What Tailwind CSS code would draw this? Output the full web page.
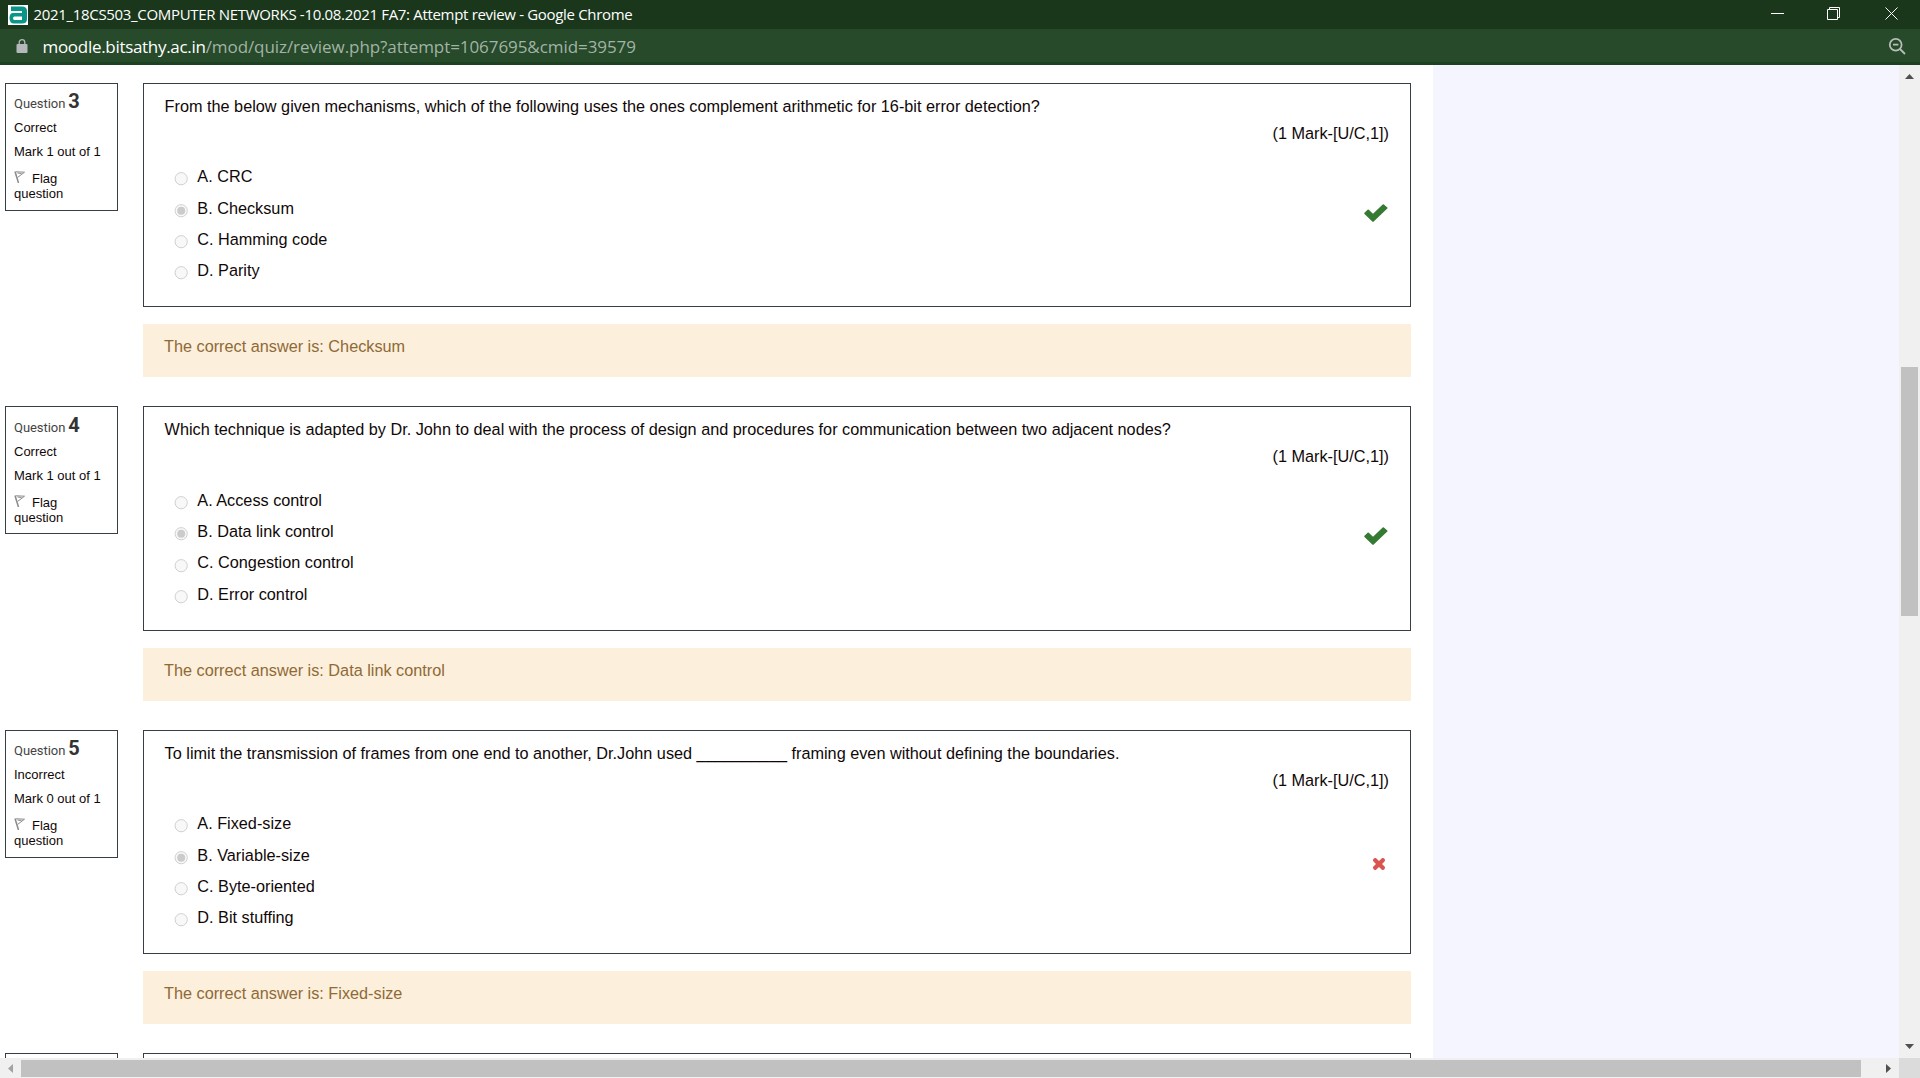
<!DOCTYPE html>
<html lang="en">
<head>
<meta charset="utf-8">
<title>2021_18CS503_COMPUTER NETWORKS -10.08.2021 FA7: Attempt review</title>
<script src="https://cdn.jsdelivr.net/npm/@tailwindcss/browser@4"></script>
</head>
<body class="flex h-[1078px] w-[1920px] flex-col overflow-hidden bg-white font-['Liberation_Sans',Arial,sans-serif]">
<header class="shrink-0 font-['Open_Sans',sans-serif]">
  <div class="flex h-[29px] items-center bg-[#1a371c] text-white">
    <svg class="ml-2 size-5 shrink-0" viewBox="0 0 20 20"><path fill="#fff" d="M0 0h20v20H0z"/><path fill="#0b9488" d="M3 1.500h11q5 0 5 4.500v8q0 4.500-5 4.500H6Q1.500 18.500 1.500 13T6 8h8V6H3zM6.500 11.500q-1.500 0-1.500 1.700T6.500 15H14v-3.500z"/></svg>
    <span class="ml-[5.500px] text-[15px] leading-[29px] tracking-[-0.32px] whitespace-nowrap">2021_18CS503_COMPUTER NETWORKS -10.08.2021 FA7: Attempt review - Google Chrome</span>
    <svg class="ml-auto h-[29px] w-[149px] shrink-0" viewBox="0 0 149 29" fill="none" stroke="#fff"><path d="M0 13.500h13M56.500 9.500h10v10h-10zM58.500 9V7.500h10v10H67M114.500 7.500l12 12m0-12l-12 12"/></svg>
  </div>
  <div class="flex h-9 items-center border-b-[3px] border-[#1b4321] bg-[#264a2a]">
    <svg class="ml-4 h-[14px] w-3 shrink-0" viewBox="0 0 12 14"><path fill="#b4b8bb" d="M1.500 5h9q1 0 1 1v7q0 1-1 1h-9q-1 0-1-1V6q0-1 1-1z"/><path fill="none" stroke="#b4b8bb" stroke-width="1.300" d="M3.200 5.500V3.500a2.800 2.800 0 0 1 5.600 0v2"/></svg>
    <span class="ml-[14.500px] pt-0.5 text-[17px] leading-[33px] tracking-[-0.3px] text-white">moodle.bitsathy.ac.in</span><span class="pt-0.5 text-[17px] leading-[33px] tracking-[-0.07px] text-[#a3b3a5]">/mod/quiz/review.php?attempt=1067695&amp;cmid=39579</span>
    <svg class="mr-[14px] ml-auto size-[18px]" viewBox="0 0 18 18" fill="none" stroke="#b9bdb9" stroke-width="1.800"><circle cx="7.700" cy="7.700" r="5.900"/><path d="M12 12l5 5M5 7.700h5.400"/></svg>
  </div>
</header>

<div class="flex min-h-0 flex-1">
  <main id="questions" class="h-[993px] w-[1433px] shrink-0 overflow-hidden bg-white pt-[18px] pl-[5px]"></main>
  <aside class="flex-1 bg-[#f4f5ff]"></aside>
  <div class="flex w-[21px] shrink-0 flex-col items-center bg-[#f0f0f0]">
    <svg class="h-[302px] w-[21px] shrink-0" viewBox="0 0 21 302"><path fill="#505050" d="M6 14l4.500-5 4.500 5z"/></svg>
    <div class="h-[249px] w-[17px] bg-[#c1c1c1]"></div>
    <svg class="mt-auto h-[21px] w-[21px] shrink-0" viewBox="0 0 21 21"><path fill="#505050" d="M6 7h9l-4.500 5z"/></svg>
  </div>
</div>
<footer class="flex h-5 shrink-0 items-center bg-[#f0f0f0]">
  <svg class="h-5 w-[21px] shrink-0" viewBox="0 0 21 20"><path fill="#a3a3a3" d="M13 6v9l-5-4.500z"/></svg>
  <div class="h-[17px] w-[1840px] shrink-0 bg-[#c1c1c1]"></div>
  <svg class="h-5 w-[38px] shrink-0" viewBox="0 0 38 20"><path fill="#505050" d="M25 6v9l5-4.500z"/></svg>
  <div class="h-5 w-[21px] bg-[#dbdbdb]"></div>
</footer>

<script>
const questions = [
  { no: 3, ok: true, mark: 1, shift: false, h: 'h-[323px]', box: 'h-[224px]',
    text: 'From the below given mechanisms, which of the following uses the ones complement arithmetic for 16-bit error detection?',
    options: ['CRC', 'Checksum', 'Hamming code', 'Parity'], answer: 'Checksum' },
  { no: 4, ok: true, mark: 1, shift: true, h: 'h-[324px]', box: 'h-[225px]',
    text: 'Which technique is adapted by Dr. John to deal with the process of design and procedures for communication between two adjacent nodes?',
    options: ['Access control', 'Data link control', 'Congestion control', 'Error control'], answer: 'Data link control' },
  { no: 5, ok: false, mark: 0, shift: false, h: 'h-[323px]', box: 'h-[224px]',
    text: 'To limit the transmission of frames from one end to another, Dr.John used __________ framing even without defining the boundaries.',
    options: ['Fixed-size', 'Variable-size', 'Byte-oriented', 'Bit stuffing'], answer: 'Fixed-size' },
];
const tick = '<svg class="mt-[110px] mr-[22px] h-[18px] w-6" viewBox="0 0 24 18"><path fill="#357a32" d="M0.500 8.800L3.600 5.700q.6-.5 1.200 0L9 9.800 18.700.4q.6-.5 1.200 0l3.400 3q.6.600 0 1.200L9.700 17.600q-.7.600-1.400 0L.5 10q-.5-.6 0-1.200z"/></svg>';
const cross = '<svg class="mt-[117px] mr-[25px] size-3" viewBox="0 0 12 12"><path stroke="#d9534f" stroke-width="4.200" stroke-linecap="round" d="M2.200 2.200l7.600 7.600M9.800 2.200l-7.600 7.600"/></svg>';
const flag = '<svg class="h-3 w-[11px]" viewBox="0 0 11 12" fill="none" stroke="#8a8a8a"><path stroke-width="1.500" d="M1 0.500L4.500 12"/><path d="M2 .8L10.500 1.200 3.500 6.500M3.500 2l4 .5"/></svg>';

document.getElementById('questions').innerHTML = questions.map(q => `
  <section class="flex ${q.h} items-start">
    <div class="h-[128px] w-[113px] border border-[#373f46] ${q.shift ? 'pt-[9px]' : 'pt-2'} pl-2 text-[13px] text-[#100808]">
      <div class="flex h-6 items-baseline font-['Roboto',sans-serif] leading-[19px] text-[#444]"><span class="tracking-[-0.05px]">Question</span><b class="ml-[3px] text-xl leading-[19px] text-[#333]">${q.no}</b></div>
      <div class="h-6 leading-6">${q.ok ? 'Correct' : 'Incorrect'}</div>
      <div class="h-6 leading-6">Mark ${q.mark} out of 1</div>
      <div class="mt-[7px] flex h-[15px] leading-[15px]">${flag}<span class="ml-[7px]">Flag</span></div>
      <div class="leading-[15px]">question</div>
    </div>
    <div class="ml-[25px] w-[1268px]">
      <div class="flex ${q.box} justify-between border border-[#373f46] pt-[10px] pl-[20px] text-[16.25px] text-[#100808]">
        <div>
          <p class="pl-[0.6px] leading-6 whitespace-nowrap">${q.text}</p>
          <div class="${q.shift ? 'mt-[44px]' : 'mt-[43px]'}">
            ${q.options.map((o, i) => `
            <div class="flex pl-[10px] ${i === (q.shift ? 2 : 0) ? 'h-8' : 'h-[31px]'} items-start">
              <svg class="${q.shift && i === 2 ? 'mt-3' : 'mt-[11px]'} size-[14px] shrink-0" viewBox="0 0 14 14"><circle cx="7.200" cy="6.700" r="6.100" fill="#f8f8f8" stroke="#d0d0d0"/>${i === 1 ? '<circle cx="7.200" cy="6.700" r="4" fill="#cbcbcb"/>' : ''}</svg>
              <span class="ml-[9.300px] leading-[31px]">${'ABCD'[i]}. ${o}</span>
            </div>`).join('')}
          </div>
        </div>
        <div class="flex h-full flex-col items-end">
          <p class="mt-[26px] mr-[21px] h-[27px] leading-[27px]">(1 Mark-[U/C,1])</p>
          <div class="-mt-[53px]">${q.ok ? tick : cross}</div>
        </div>
      </div>
      <div class="mt-[17px] h-[53px] bg-[#fcefdc] pt-[10px] pl-[21px] text-[16.25px] leading-6 text-[#8e6a36]">The correct answer is: ${q.answer}</div>
    </div>
  </section>`).join('') + `
  <section class="flex items-start">
    <div class="h-[128px] w-[113px] border border-[#373f46]"></div>
    <div class="ml-[25px] h-[224px] w-[1268px] border border-[#373f46]"></div>
  </section>`;
</script>
</body>
</html>
